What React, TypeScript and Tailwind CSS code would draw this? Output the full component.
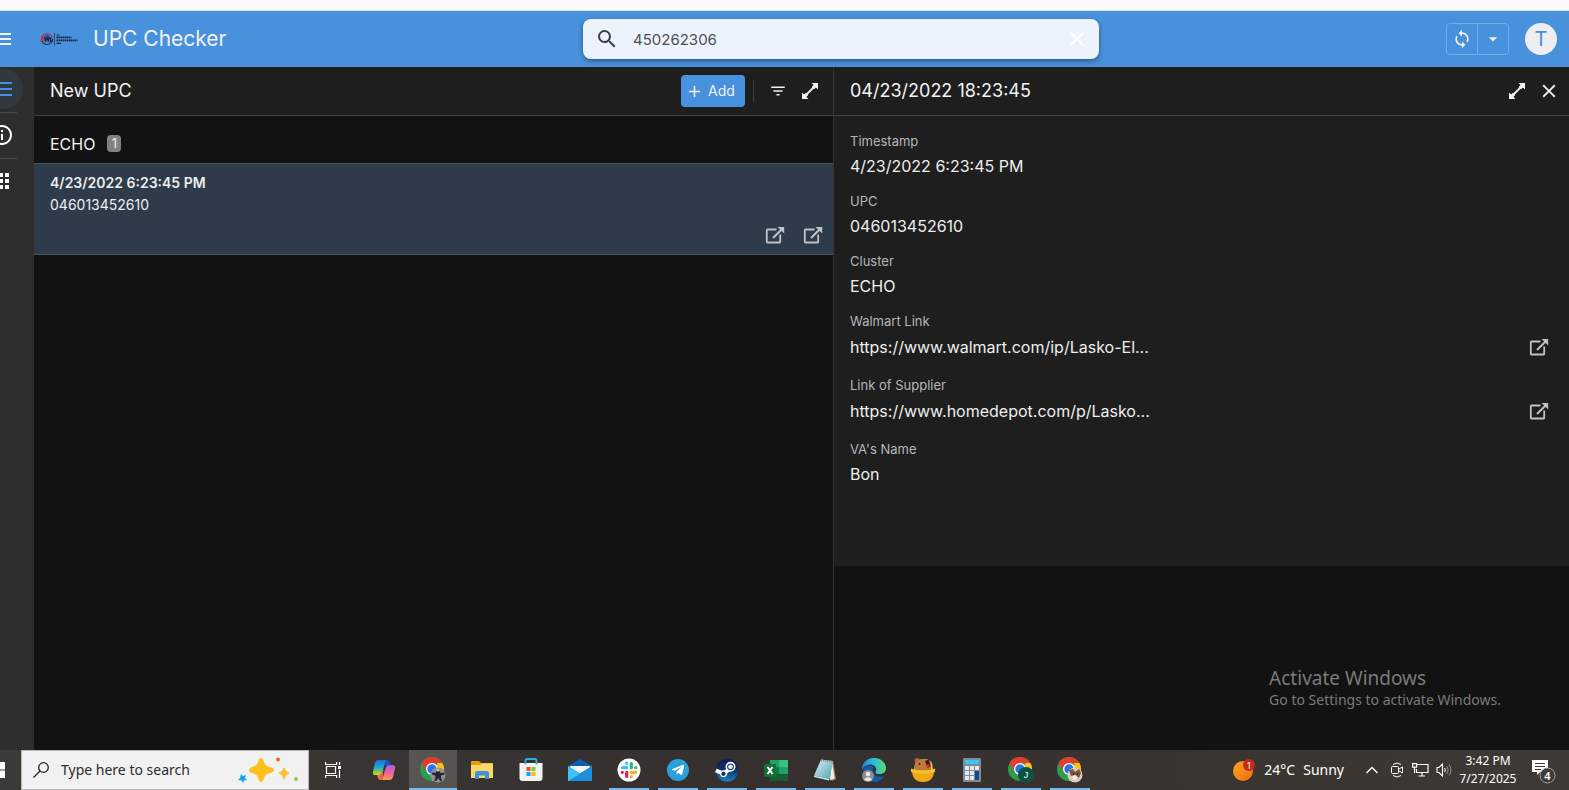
import { useState } from 'react';
import type { ReactNode } from 'react';
import {
  MdAdd,
  MdApps,
  MdArrowDropDown,
  MdClose,
  MdFilterList,
  MdInfoOutline,
  MdMenu,
  MdSearch,
  MdSync,
} from 'react-icons/md';
import { FaTelegramPlane } from 'react-icons/fa';

interface Field {
  label: string;
  value: string;
  link?: boolean;
}

const fields: Field[] = [
  { label: 'Timestamp', value: '4/23/2022 6:23:45 PM' },
  { label: 'UPC', value: '046013452610' },
  { label: 'Cluster', value: 'ECHO' },
  { label: 'Walmart Link', value: 'https://www.walmart.com/ip/Lasko-El...', link: true },
  { label: 'Link of Supplier', value: 'https://www.homedepot.com/p/Lasko...', link: true },
  { label: "VA's Name", value: 'Bon' },
];

function ExpandIcon() {
  return (
    <svg viewBox="0 0 18 18" className="size-[18px]" fill="currentColor">
      <path d="M10.500 1H17v6.500l-2.100-2.100-1.900 1.900-2.300-2.300 1.900-1.900z" />
      <path d="M7.500 17H1v-6.500l2.100 2.100L5 10.700 7.300 13l-1.900 1.900z" />
      <path d="M5.500 12.500l7-7" stroke="currentColor" strokeWidth="1.800" />
    </svg>
  );
}

function ExternalIcon() {
  return (
    <svg viewBox="0 0 20 18" className="w-5 h-[18px]" fill="none" stroke="currentColor" strokeWidth="1.800">
      <path d="M11.500 3.500H2.400a.6.6 0 0 0-.6.6v11.800a.6.6 0 0 0 .6.6h12.200a.6.6 0 0 0 .6-.6V8.500" />
      <path d="M8 12l8.500-8.500" strokeWidth="2" />
      <path d="M12.500 1h6.700v6.500z" fill="currentColor" stroke="none" />
    </svg>
  );
}

function CompanyLogo() {
  return (
    <svg viewBox="0 0 38 16" className="w-[38px] h-4" role="img" aria-label="Company logo">
      <path d="M1.500 8a5.500 5.500 0 0 1 11 0" fill="none" stroke="#a3305f" strokeWidth="1.200" />
      <path d="M1.500 8a5.500 5.500 0 0 0 11 0" fill="none" stroke="#1c2f55" strokeWidth="1.200" />
      <circle cx="7" cy="6" r="2.500" fill="#27558f" />
      <path d="M1 10.500l1.700-4.500 1.800 4.500" fill="none" stroke="#d0234a" strokeWidth="1.400" />
      <path d="M4.500 6l1.300 4L7 7l1.200 3 1.300-4M10.500 6v4.200h2.300" fill="none" stroke="#1b2138" strokeWidth="1.200" />
      <path d="M14.500 2v12.500" stroke="#234a77" />
      <path d="M16.500 4h3" stroke="#1a2f4a" />
      <path d="M16.500 6.300h15" stroke="#15273d" strokeWidth="1.800" strokeDasharray="1.600 .4" />
      <path d="M16.500 9.300h21" stroke="#15273d" strokeWidth="1.800" strokeDasharray="1.600 .4" />
      <path d="M16.500 12.300h4.500" stroke="#1a2f4a" strokeWidth="1.400" />
    </svg>
  );
}

function AppHeader() {
  const [query, setQuery] = useState('450262306');

  return (
    <header className="relative flex items-center justify-between h-14 bg-[#4891dc] text-[#f1f1f1] pr-3">
      <div className="flex items-center">
        <button aria-label="Menu" className="-ml-2.5">
          <MdMenu className="size-6" />
        </button>
        <div className="ml-[26px]">
          <CompanyLogo />
        </div>
        <h1 className="ml-[15px] text-[21px] leading-7">UPC Checker</h1>
      </div>

      <div className="absolute left-[583px] right-[470px] top-2 h-10 flex items-center rounded-lg bg-[#ecf3fc] shadow-[0_2px_5px_rgba(0,0,0,0.4)] pl-3 pr-2.5">
        <MdSearch className="size-6 text-[#3c4043]" />
        <input
          type="text"
          aria-label="Search"
          value={query}
          onChange={(e) => setQuery(e.target.value)}
          className="flex-1 min-w-0 ml-3.5 pt-0.5 text-[15px] text-[#4c5056] bg-transparent outline-none"
        />
        <button aria-label="Clear search" onClick={() => setQuery('')} className="text-white">
          <MdClose className="size-6" />
        </button>
      </div>

      <div className="flex items-center gap-4">
        <div className="flex h-8 w-[63px] rounded border border-[#76ade5] divide-x divide-[#76ade5]">
          <button aria-label="Sync" className="flex-1 flex items-center justify-center">
            <MdSync className="size-5" />
          </button>
          <button aria-label="Sync options" className="flex-1 flex items-center justify-center">
            <MdArrowDropDown className="size-5" />
          </button>
        </div>
        <button className="size-8 rounded-full bg-[#eeeeee] text-xl leading-8 text-[#4891dc]">T</button>
      </div>
    </header>
  );
}

function SideRail() {
  return (
    <nav className="w-14 -ml-[22px] shrink-0 bg-[#2e2e2e] text-white pl-[5px] pt-0.5">
      <a href="#list" aria-label="List" className="flex items-center justify-center size-10 rounded-full bg-[#313840] text-[#4891dc]">
        <svg viewBox="0 0 18 14" className="w-[18px] h-3.5" stroke="currentColor" strokeWidth="2">
          <path d="M0 1h18M0 7h18M0 13h18" />
        </svg>
      </a>
      <hr className="w-[34px] mt-[3px] border-[#4b4b4b]" />
      <a href="#about" aria-label="About" className="flex items-center justify-center w-[38px] h-11">
        <MdInfoOutline className="size-6" />
      </a>
      <hr className="w-[34px] mt-px border-[#4b4b4b]" />
      <a href="#apps" aria-label="Apps" className="flex items-center justify-center w-9 h-11">
        <MdApps className="size-6" />
      </a>
    </nav>
  );
}

function UpcList() {
  return (
    <section className="min-w-0">
      <div className="flex items-center justify-between h-[49px] pl-4 pr-3.5 bg-[#1e1e1e] border-b border-[#414141]">
        <h2 className="text-lg text-[#f3f3f3]">New UPC</h2>
        <div className="flex items-center text-[#f1f1f1]">
          <button className="flex items-center h-8 w-16 pl-1 gap-1 rounded bg-[#4891dc] text-sm">
            <MdAdd className="size-[19px]" />
            <span>Add</span>
          </button>
          <div className="w-px h-[22px] ml-2 mr-[15px] bg-[#3d3d3d]"></div>
          <button aria-label="Filter">
            <MdFilterList className="size-[18px]" />
          </button>
          <button aria-label="Expand list" className="ml-3.5">
            <ExpandIcon />
          </button>
        </div>
      </div>

      <div className="flex items-center gap-3 h-[47px] pl-4 pt-2">
        <h3 className="text-base leading-5 text-[#f1f1f1]">ECHO</h3>
        <span className="w-3.5 h-[17px] rounded bg-[#7f8286] text-[13px] leading-[17px] text-center text-[#eeeeee]">1</span>
      </div>

      <article className="h-[92px] pl-4 pr-2.5 pt-2 bg-[#2d3b4b] border-y border-[#4a525a] text-[#eeeeee]">
        <p className="text-sm leading-[22px] font-semibold">4/23/2022 6:23:45 PM</p>
        <p className="text-sm leading-[22px]">046013452610</p>
        <div className="flex justify-end gap-[18px] mt-2.5 text-[#c0c4c9]">
          <button aria-label="Open Walmart link">
            <ExternalIcon />
          </button>
          <button aria-label="Open supplier link">
            <ExternalIcon />
          </button>
        </div>
      </article>
    </section>
  );
}

function DetailPane() {
  return (
    <section className="min-w-0 border-l border-[#333333]">
      <div className="flex items-center justify-between h-[49px] pl-4 pr-[9px] bg-[#1e1e1e] border-b border-[#414141] text-[#f3f3f3]">
        <h2 className="text-lg">04/23/2022 18:23:45</h2>
        <div className="flex items-center gap-3">
          <button aria-label="Expand details">
            <ExpandIcon />
          </button>
          <button aria-label="Close details">
            <MdClose className="size-[22px]" />
          </button>
        </div>
      </div>

      <dl className="bg-[#1e1e1e] pl-4 pr-5 pt-[15px] pb-[67px]">
        {fields.map((field) => (
          <div key={field.label} className={field.link ? 'mb-3' : 'mb-2.5'}>
            <dt className="text-[13px] leading-5 text-[#b3b7ba]">{field.label}</dt>
            <dd
              className={`flex items-center justify-between text-base text-[#eeeeee] ${field.link ? 'h-8' : 'h-[30px]'}`}
            >
              {field.link ? <a href="#open">{field.value}</a> : field.value}
              {field.link && (
                <button aria-label={`Open ${field.label}`} className="text-[#c0c0c0]">
                  <ExternalIcon />
                </button>
              )}
            </dd>
          </div>
        ))}
      </dl>
    </section>
  );
}

function ChromeLogo({ children }: { children?: ReactNode }) {
  return (
    <svg viewBox="0 0 28 26" className="w-7 h-[26px]">
      <circle cx="13" cy="12" r="12" fill="#2d9c4b" />
      <path d="M23.400 6A12 12 0 0 1 13 24l5.200-9V6z" fill="#fbc116" />
      <path d="M2.600 6A12 12 0 0 1 23.400 6H13l-5.200 9z" fill="#e33b2e" />
      <circle cx="13" cy="12" r="6" fill="#fff" />
      <circle cx="13" cy="12" r="4.700" fill="#2f73e2" />
      {children}
    </svg>
  );
}

function CopilotLogo() {
  return (
    <svg viewBox="0 0 24 22" className="w-6 h-[22px]">
      <defs>
        <linearGradient id="copilotA" x1="0" y1="0" x2="0" y2="1">
          <stop offset="0" stopColor="#1f6fe0" />
          <stop offset=".5" stopColor="#22a7cf" />
          <stop offset=".8" stopColor="#8fc94a" />
          <stop offset="1" stopColor="#f1c928" />
        </linearGradient>
        <linearGradient id="copilotB" x1="0" y1="0" x2="0" y2="1">
          <stop offset="0" stopColor="#a35cf0" />
          <stop offset=".5" stopColor="#ee5f9a" />
          <stop offset="1" stopColor="#fb9a55" />
        </linearGradient>
      </defs>
      <path d="M12 1h3.500q2 0 2.700 2l1 3.500h-4L12 6z" fill="#1c4fc0" />
      <path d="M6 1h8l-4 13q-.8 2-3 2H3.500Q.3 16 1 12.500L3 4q.8-3 3-3z" fill="url(#copilotA)" />
      <path d="M18 21h-8l4-13q.8-2 3-2h3.500q3.200 0 2.500 3.500L21 18q-.8 3-3 3z" fill="url(#copilotB)" />
      <path d="M8.500 21q-2 0-2.700-2l-.9-3H7q2 0 3-2l1.500-4-1 11z" fill="#f0684b" />
    </svg>
  );
}

function ExplorerLogo() {
  return (
    <svg viewBox="0 0 22 18" className="w-[22px] h-[18px]">
      <path d="M0 1a1 1 0 0 1 1-1h7l2 2h11a1 1 0 0 1 1 1v3H0z" fill="#e3a007" />
      <path d="M0 4h9l1.500-1.500H22V17H0z" fill="#fbd668" />
      <path d="M4 18v-6a2 2 0 0 1 2-2h10a2 2 0 0 1 2 2v6h-4v-3.500H8V18z" fill="#3d93d9" />
    </svg>
  );
}

function StoreLogo() {
  return (
    <svg viewBox="0 0 24 24" className="size-6">
      <path d="M.5 5h23v15a3 3 0 0 1-3 3h-17a3 3 0 0 1-3-3z" fill="#f2f2f2" />
      <path d="M6.500 6.500v-4A1.500 1.500 0 0 1 8 1h8a1.500 1.500 0 0 1 1.500 1.500v4" fill="none" stroke="#2cb0e8" strokeWidth="1.800" />
      <path d="M7.500 9h4v4h-4z" fill="#f1511b" />
      <path d="M12.500 9h4v4h-4z" fill="#80cc28" />
      <path d="M7.500 14h4v4h-4z" fill="#00adef" />
      <path d="M12.500 14h4v4h-4z" fill="#fbbc09" />
    </svg>
  );
}

function MailLogo() {
  return (
    <svg viewBox="0 0 24 22" className="w-6 h-[22px]">
      <path d="M0 7l12-7 12 7v3H0z" fill="#0a5fb4" />
      <path d="M2 7h20v4l-10 5L2 11z" fill="#f4f4f4" />
      <path d="M0 7l12 7.500L24 7v15H0z" fill="#28aee9" />
      <path d="M0 22L24 7v15z" fill="#1b8fdc" />
      <path d="M0 7l12 7.500L0 22z" fill="#3cc3f5" />
    </svg>
  );
}

function SlackLogo() {
  return (
    <svg viewBox="0 0 24 24" className="size-6">
      <circle cx="12" cy="12" r="11.500" fill="#fff" />
      <g strokeWidth="3.200" strokeLinecap="round">
        <path d="M5.500 9.700h4.200M9.700 5.200v.1" stroke="#36c5f0" />
        <path d="M14.300 5.500v4.200M18.700 9.700h.1" stroke="#2eb67d" />
        <path d="M18.500 14.300h-4.200M14.300 18.700v.1" stroke="#ecb22e" />
        <path d="M9.700 18.500v-4.200M5.200 14.300h.1" stroke="#e01e5a" />
      </g>
    </svg>
  );
}

function SteamLogo() {
  return (
    <svg viewBox="0 0 24 24" className="size-6">
      <defs>
        <linearGradient id="steam" x1="0" y1="0" x2="0" y2="1">
          <stop offset="0" stopColor="#11204f" />
          <stop offset=".5" stopColor="#10306a" />
          <stop offset="1" stopColor="#1a86c2" />
        </linearGradient>
      </defs>
      <circle cx="12" cy="12" r="11.500" fill="url(#steam)" />
      <path d="M.8 12.500l7.700 3.200 6-4.500" fill="none" stroke="#fff" strokeWidth="4" />
      <circle cx="15.500" cy="8.800" r="4.200" fill="#12285a" stroke="#fff" strokeWidth="1.600" />
      <circle cx="15.500" cy="8.800" r="2.400" fill="#e8edf5" />
      <circle cx="8.500" cy="15.800" r="2.800" fill="#12306a" stroke="#fff" strokeWidth="1.300" />
    </svg>
  );
}

function ExcelLogo() {
  return (
    <svg viewBox="0 0 24 22" className="w-6 h-[22px]">
      <path d="M6 1h9v7H6z" fill="#21a366" />
      <path d="M15 1h9v7h-9z" fill="#33c481" />
      <path d="M6 8h9v7H6z" fill="#107c41" />
      <path d="M15 8h9v7h-9z" fill="#21a366" />
      <path d="M6 15h18v7H6z" fill="#185c37" />
      <path d="M0 5h12v13H0z" fill="#0f7038" />
      <path d="M3.500 8l5 7M8.500 8l-5 7" stroke="#fff" strokeWidth="1.900" />
    </svg>
  );
}

function NotepadLogo() {
  return (
    <svg viewBox="0 0 24 24" className="size-6">
      <defs>
        <linearGradient id="note" x1="0" y1="0" x2="1" y2="1">
          <stop offset="0" stopColor="#dff1f4" />
          <stop offset="1" stopColor="#4aa5b8" />
        </linearGradient>
      </defs>
      <path d="M20 3l3 18-4 2-4-4z" fill="#a9865c" />
      <path d="M19 3l2.500 17.500L17 22z" fill="#f0efea" />
      <path d="M8 1.500L20 3l-3.500 18L1 17.500z" fill="url(#note)" />
      <path d="M1 17.500l15.500 3.500-.5 1.500L1 19z" fill="#c9e6ea" />
      <path d="M8 2.500l11 1.200" stroke="#8b9598" strokeDasharray="1 1" strokeWidth="2" />
    </svg>
  );
}

function EdgeLogo() {
  return (
    <svg viewBox="0 0 26 26" className="size-[26px]">
      <defs>
        <linearGradient id="edge" x1="0" y1="0" x2="1" y2="0">
          <stop offset="0" stopColor="#1b85d5" />
          <stop offset=".5" stopColor="#2bbfdf" />
          <stop offset="1" stopColor="#5fdc62" />
        </linearGradient>
      </defs>
      <path d="M2 12A12 12 0 0 0 14 25q6 0 9-6-5 2-9-1-4-4-1-8-7-4-11 2z" fill="#1259a8" />
      <path d="M1 11C2 4 8 1 13 1c7 0 12 5 12 10 0 4-3 6-6.500 6-3 0-4.500-1.500-4-2.500C17 11 13 7 8.500 7.500 5 8 2 10 1 13z" fill="url(#edge)" />
      <circle cx="7" cy="19" r="6" fill="#8d8d8d" />
      <circle cx="7" cy="17" r="2.300" fill="#e8e8e8" />
      <path d="M3 22.500q4-5 8 0-4 3-8 0z" fill="#e8e8e8" />
    </svg>
  );
}

function BearLogo() {
  return (
    <svg viewBox="0 0 24 26" className="w-6 h-[26px]">
      <path d="M3 13Q3 6 7 3q10-3 14 3l1 7z" fill="#d7d070" />
      <circle cx="6" cy="3.500" r="2.500" fill="#a96b2c" />
      <path d="M4 14V7q2-5 8-5 7 0 8 5v7z" fill="#bd7b37" />
      <path d="M14 4l4-1.500 1.500 7-3 1.500z" fill="#4a1512" />
      <path d="M15 8l3-1 .5 3-2 1z" fill="#d23a3a" />
      <circle cx="8.500" cy="7" r=".9" fill="#2c1b10" />
      <path d="M1 13h22q0 12-11 12T1 13z" fill="#f0a916" />
      <path d="M0 11.500q12 5 24 0V15q-12 3-24 0z" fill="#f8c02c" />
    </svg>
  );
}

function CalculatorLogo() {
  return (
    <svg viewBox="0 0 18 24" className="w-[18px] h-6">
      <rect width="18" height="24" rx="1" fill="#7f8b95" />
      <path d="M2 2h14v4H2z" fill="#39c6f0" />
      <path d="M2 8h4v4H2zM7 8h4v4H7zM12 8h4v4h-4zM2 13h4v4H2zM7 13h4v4H7zM2 18h4v4H2zM7 18h4v4H7z" fill="#e6eaed" />
      <path d="M12 13h4v9h-4z" fill="#134b87" />
    </svg>
  );
}

interface TaskApp {
  name: string;
  icon: ReactNode;
  open?: boolean;
  active?: boolean;
}

const taskApps: TaskApp[] = [
  { name: 'Copilot', icon: <CopilotLogo /> },
  {
    name: 'Chrome',
    active: true,
    open: true,
    icon: (
      <ChromeLogo>
        <circle cx="19" cy="18" r="7.500" fill="#8d9295" />
        <path d="M12.500 15.500l4 .5 1-2h3l1 2 4-.5v2l-3.500 1v2l1 3.500h-1.800l-2-3-2 3h-1.800l1-3.500v-2l-3.400-1z" fill="#24262a" />
        <circle cx="19" cy="13" r="1.500" fill="#d8c3b0" />
      </ChromeLogo>
    ),
  },
  { name: 'File Explorer', icon: <ExplorerLogo /> },
  { name: 'Microsoft Store', icon: <StoreLogo /> },
  { name: 'Mail', icon: <MailLogo /> },
  { name: 'Slack', open: true, icon: <SlackLogo /> },
  {
    name: 'Telegram',
    open: true,
    icon: (
      <span className="flex items-center justify-center size-[22px] rounded-full bg-[#2ba0dc] text-white">
        <FaTelegramPlane className="size-3.5" />
      </span>
    ),
  },
  { name: 'Steam', open: true, icon: <SteamLogo /> },
  { name: 'Excel', open: true, icon: <ExcelLogo /> },
  { name: 'Notepad', open: true, icon: <NotepadLogo /> },
  { name: 'Edge', open: true, icon: <EdgeLogo /> },
  { name: 'Honey', open: true, icon: <BearLogo /> },
  { name: 'Calculator', open: true, icon: <CalculatorLogo /> },
  {
    name: 'Chrome, profile J',
    open: true,
    icon: (
      <ChromeLogo>
        <circle cx="19" cy="18" r="8" fill="#0b5345" />
        <text x="19" y="21" fontSize="9" fontFamily="Liberation Sans, sans-serif" fill="#fff" textAnchor="middle">J</text>
      </ChromeLogo>
    ),
  },
  {
    name: 'Chrome, second profile',
    open: true,
    icon: (
      <ChromeLogo>
        <circle cx="19" cy="18" r="7.500" fill="#d9cbbd" />
        <path d="M13 13l4-1 2 3 4-3 2 4-2 5-4-3-4 1z" fill="#7d5638" />
        <circle cx="19" cy="20.500" r="2.300" fill="#f6eee6" />
        <path d="M17 17h1M21 17h1" stroke="#241812" strokeWidth="1.500" />
      </ChromeLogo>
    ),
  },
];

function Taskbar() {
  const [search, setSearch] = useState('');

  return (
    <footer className="flex h-10 font-['Noto_Sans',sans-serif] text-white bg-linear-to-r from-[#3a3a37] via-[#352f2d] to-[#3d3934]">
      <button aria-label="Start" className="w-[21px] flex items-center">
        <svg viewBox="0 0 5 16" className="w-[5px] h-4" fill="#fff">
          <path d="M0 0h5v7.500H0zM0 8.500h5V16H0z" />
        </svg>
      </button>

      <label className="flex items-center w-72 shrink-0 pl-[11px] pr-2 bg-[#f1f1f1] border border-[#b8b8b8]">
        <svg viewBox="0 0 16 16" className="size-4" fill="none" stroke="#222" strokeWidth="1.300">
          <circle cx="10.500" cy="5.500" r="4.800" />
          <path d="M7 9L.5 15.500" />
        </svg>
        <input
          type="text"
          aria-label="Type here to search"
          placeholder="Type here to search"
          value={search}
          onChange={(e) => setSearch(e.target.value)}
          className="flex-1 min-w-0 ml-3 text-sm text-[#222222] placeholder:text-[#2b2b2b] outline-none"
        />
        <svg viewBox="0 0 64 26" className="w-16 h-[26px]">
          <path d="M25 1q2 0 3 4 1 4 6 5 4 1 4 3t-4 3q-5 1-6 5-1 4-3 4t-3-4q-1-4-6-5-3-1-3-3t3-3q5-1 6-5 1-4 3-4z" fill="#fbbf1e" />
          <path d="M48 11q1 4 5 5-4 1-5 6-1-5-5-6 4-1 5-5z" fill="#fbc02d" stroke="#fbc02d" />
          <path d="M5 17l2 2 3-1-1 3 2 2-3 .5L7 26l-1.500-2.500L2 23l2-2z" fill="#16a5e8" />
          <circle cx="42" cy="2.500" r="2" fill="#f4622a" />
          <circle cx="60" cy="22" r="2" fill="#8bcb45" />
        </svg>
      </label>

      <button aria-label="Task view" className="w-12 mr-[3px] shrink-0 flex items-center justify-center">
        <svg viewBox="0 0 17 16" className="w-[17px] h-4" fill="none" stroke="#fff" strokeWidth="1.200">
          <path d="M1.500 4.500h9v7h-9zM.6 0v2.500h11V0M.6 16v-2.500h11V16M14.500 0v3M14.500 8v8" />
          <path d="M13 4h3v3h-3z" fill="#fff" stroke="none" />
        </svg>
      </button>

      <div className="flex gap-px">
        {taskApps.map((app) => (
          <button
            key={app.name}
            aria-label={app.name}
            className={`relative w-12 shrink-0 flex items-center justify-center ${app.active ? 'bg-[#575552]' : ''}`}
          >
            {app.icon}
            {app.open && (
              <span
                className={`absolute bottom-0 h-0.5 bg-[#76b9ed] ${app.active ? 'inset-x-0' : 'inset-x-1'}`}
              ></span>
            )}
          </button>
        ))}
      </div>

      <div className="flex items-center ml-auto shrink-0 pr-[13px]">
        <button className="flex items-center text-sm">
          <svg viewBox="0 0 24 24" className="size-6">
            <defs>
              <linearGradient id="sun" x1="0" y1="0" x2="1" y2="1">
                <stop offset="0" stopColor="#fba821" />
                <stop offset="1" stopColor="#ef6c0a" />
              </linearGradient>
            </defs>
            <circle cx="11" cy="13" r="10" fill="url(#sun)" />
            <circle cx="17" cy="7" r="6" fill="#c42b1c" />
            <text x="17" y="10.500" fontSize="9" fill="#fff" textAnchor="middle">1</text>
          </svg>
          <span className="ml-2">24°C</span>
          <span className="ml-2">Sunny</span>
        </button>
        <button aria-label="Show hidden icons" className="ml-[22px]">
          <svg viewBox="0 0 12 8" className="w-3 h-2" fill="none" stroke="#fff" strokeWidth="1.300">
            <path d="M.5 7L6 1.500 11.500 7" />
          </svg>
        </button>
        <button aria-label="Meet now" className="ml-[13px]">
          <svg viewBox="0 0 12 16" className="w-3 h-4" fill="none" stroke="#fff">
            <rect x=".5" y="4.500" width="7" height="7" rx="1" />
            <path d="M8 7l3.500-2v6L8 9M2 2.500q4-3 8 0M2 13.500q4 3 8 0" />
          </svg>
        </button>
        <button aria-label="Network" className="ml-[9px]">
          <svg viewBox="0 0 17 14" className="w-[17px] h-3.5" fill="none" stroke="#fff" strokeWidth="1.200">
            <path d="M5 1.500h11v8H4.500V6M10 9.500v3.500M6.500 13H13" />
            <path d="M.6.6h4v3.500h-4zM2.500 4v6" />
          </svg>
        </button>
        <button aria-label="Volume" className="ml-[7px]">
          <svg viewBox="0 0 16 14" className="w-4 h-3.5" fill="none" stroke="#fff" strokeWidth="1.100">
            <path d="M1 4.500h2L6.500 1v12L3 9.500H1zM8.500 5q1.500 2 0 4" />
            <path d="M10.500 3q3 4 0 8M13 1.500q4 5.500 0 11" stroke="#8d8b88" />
          </svg>
        </button>
        <div className="ml-[7px] w-[58px] text-xs leading-[18px] text-center whitespace-nowrap">
          <div>3:42 PM</div>
          <div>7/27/2025</div>
        </div>
        <button aria-label="Notifications" className="ml-[15px] pt-1">
          <svg viewBox="0 0 24 26" className="w-6 h-[26px]">
            <path d="M0 1h16v12H8l-3 3v-3H0z" fill="#fff" />
            <path d="M3 4.500h10M3 7.500h10M3 10.500h6" stroke="#3d3934" />
            <circle cx="15.500" cy="16.500" r="7.500" fill="#3b3b3b" stroke="#a5a5a5" />
            <text x="15.500" y="20.500" fontSize="11" fontWeight="600" fill="#fff" textAnchor="middle">4</text>
          </svg>
        </button>
      </div>
    </footer>
  );
}

export default function App() {
  return (
    <div className="flex flex-col min-h-screen overflow-hidden bg-[#121212] font-['Inter',sans-serif]">
      <div className="h-[11px] bg-[#fafaff] border-b border-[#dfe3ea]"></div>
      <AppHeader />
      <main className="relative flex flex-1">
        <SideRail />
        <div className="flex-1 grid grid-cols-[799fr_736fr]">
          <UpcList />
          <DetailPane />
        </div>
        <div className="absolute right-[68px] bottom-10 font-['Noto_Sans',sans-serif] text-[#7a7a7a]">
          <p className="text-[19px] leading-6">Activate Windows</p>
          <p className="text-sm leading-5">Go to Settings to activate Windows.</p>
        </div>
      </main>
      <Taskbar />
    </div>
  );
}
